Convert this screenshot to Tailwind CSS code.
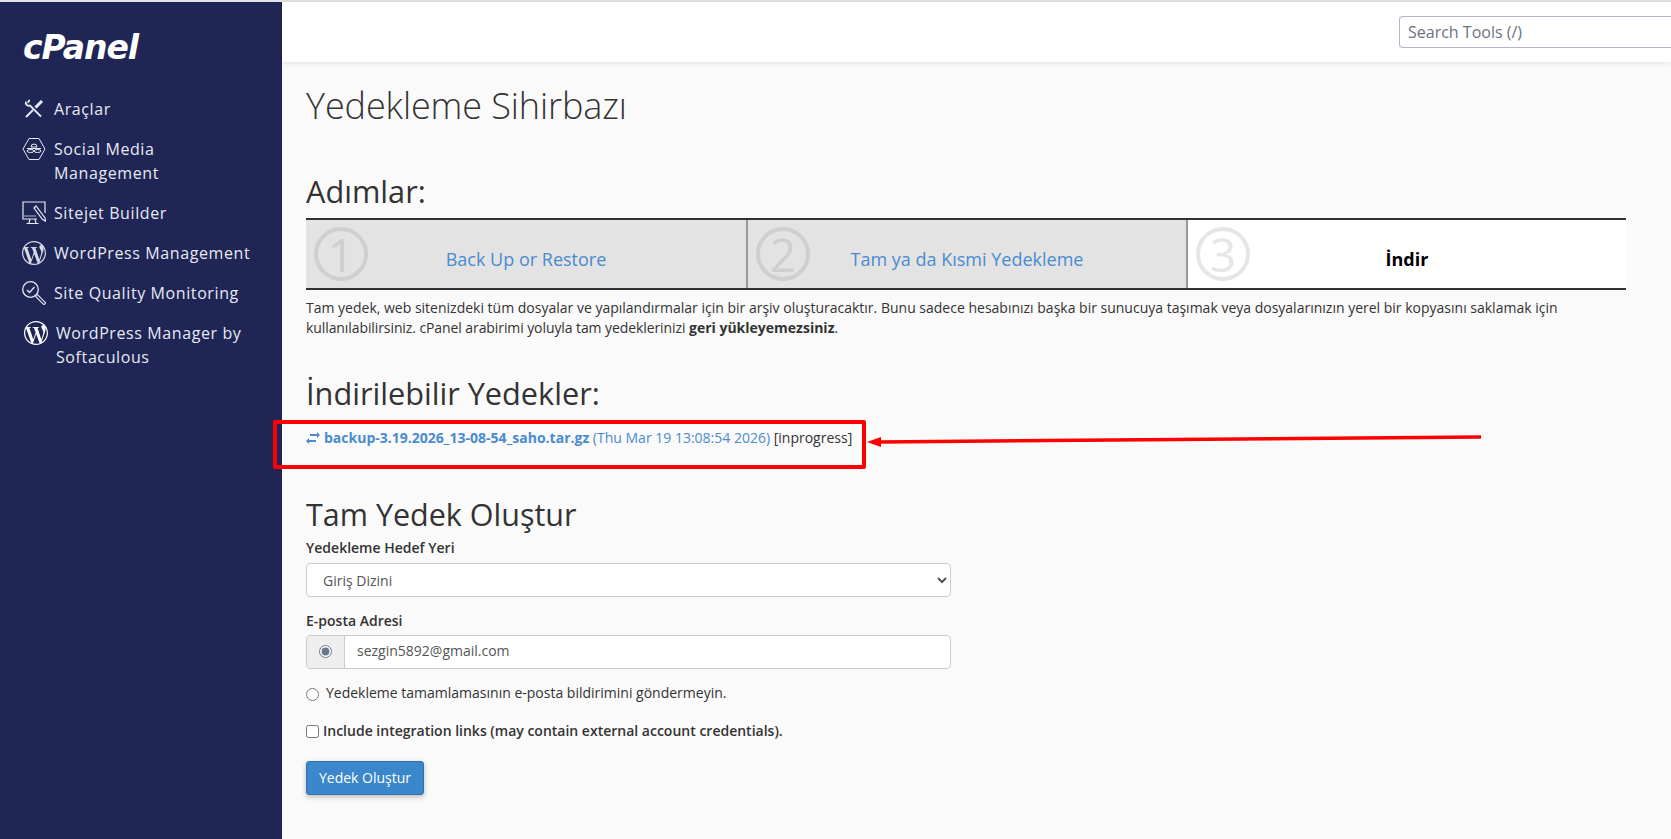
<!DOCTYPE html>
<html lang="tr">
<head>
<meta charset="UTF-8">
<script src="https://cdn.jsdelivr.net/npm/@tailwindcss/browser@4"></script>
<title>Yedekleme Sihirbazı</title>
</head>
<body class="h-[839px] overflow-hidden bg-[#fafafa] font-['Open_Sans',sans-serif] text-sm text-[#333]">
<div class="relative flex h-full border-t-2 border-[#e3e3e3]">
  <!-- sidebar -->
  <aside class="w-[282px] shrink-0 bg-[#1f2555] text-[#e6eaf2]">
    <div class="pl-[23px] pt-[26px] h-[87px] font-['DejaVu_Sans',sans-serif] text-[33px] leading-[40px] font-bold italic text-white tracking-[-1px]">cPanel</div>
    <nav class="text-base leading-6 tracking-[0.6px]">
      <a class="flex items-center gap-[8px] pl-[24px] py-[8px]">
        <svg class="w-[20px] h-[20px] shrink-0" viewBox="0 0 20 20" fill="none" stroke="currentColor" stroke-width="1.8"><path d="M2 2.5c-1 2.500 1.500 5 4 4l11 11"/><path d="M6 1.500c-1.500 0-2 1.500-1.500 2.500"/><path d="M18 2l-6.500 6.500" stroke-width="3"/><path d="M9 11l-7 7" stroke-width="2"/></svg>
        <span class="ml-[2px]">Araçlar</span>
      </a>
      <a class="flex items-start gap-[8px] pl-[22px] py-[8px]">
        <svg class="w-[24px] h-[24px] shrink-0" viewBox="0 0 24 24" fill="none" stroke="currentColor" stroke-width="1"><path d="M7 1.500h10l6 10.500-6 10.500H7L1 12z"/><path d="M9 10a3 3 0 0 1 6 0z"/><path d="M5 11.500h14"/><ellipse cx="8.500" cy="14" rx="3.500" ry="1.500"/><ellipse cx="15.500" cy="14" rx="3.500" ry="1.500"/></svg>
        <span>Social Media<br>Management</span>
      </a>
      <a class="flex items-start gap-[8px] pl-[22px] py-[8px]">
        <svg class="w-[24px] h-[24px] shrink-0" viewBox="0 0 24 24" fill="none" stroke="currentColor" stroke-width="1.2"><path d="M23 12V1H1v17h14"/><path d="M2 15h12" stroke="#9aa0b8"/><path d="M8 18l-1 4M13 18l1 4M4.500 22.500h12"/><path d="M12 7l2-2 9 12 .500 3-3-1.500z"/></svg>
        <span>Sitejet Builder</span>
      </a>
      <a class="flex items-start gap-[8px] pl-[22px] py-[8px]">
        <svg class="w-[24px] h-[24px] shrink-0 text-[#d5d9e4]" viewBox="0 0 24 24" fill="currentColor"><path d="M21.469 6.825c.84 1.537 1.318 3.3 1.318 5.175 0 3.979-2.156 7.456-5.363 9.325l3.295-9.527c.615-1.54.82-2.771.82-3.864 0-.405-.026-.78-.07-1.11m-7.981.105c.647-.03 1.232-.105 1.232-.105.582-.075.514-.93-.067-.899 0 0-1.755.135-2.88.135-1.064 0-2.85-.15-2.85-.15-.585-.03-.661.855-.075.885 0 0 .54.061 1.125.09l1.68 4.605-2.37 7.08L5.354 6.9c.649-.03 1.234-.1 1.234-.1.585-.075.516-.93-.065-.896 0 0-1.746.138-2.874.138-.2 0-.438-.008-.69-.015C4.911 3.15 8.235 1.215 12 1.215c2.809 0 5.365 1.072 7.286 2.833-.046-.003-.091-.009-.141-.009-1.06 0-1.812.923-1.812 1.914 0 .89.513 1.643 1.06 2.531.411.72.89 1.643.89 2.977 0 .915-.354 1.994-.821 3.479l-1.075 3.585-3.9-11.61.001.014zM12 22.784c-1.059 0-2.081-.153-3.048-.437l3.237-9.406 3.315 9.087c.024.053.05.101.078.149-1.12.393-2.325.609-3.582.609M1.211 12c0-1.564.336-3.05.935-4.39L7.29 21.709C3.694 19.96 1.212 16.271 1.212 12M12 0C5.385 0 0 5.385 0 12s5.385 12 12 12 12-5.385 12-12S18.615 0 12 0"/></svg>
        <span>WordPress Management</span>
      </a>
      <a class="flex items-start gap-[8px] pl-[22px] py-[8px]">
        <svg class="w-[24px] h-[24px] shrink-0" viewBox="0 0 24 24" fill="none" stroke="currentColor" stroke-width="1.3"><circle cx="8.500" cy="8.500" r="7.800"/><path d="M5 9l2.500 2.500L12.500 6"/><path d="M15 15l7 7" stroke-width="3.800" stroke-linecap="round"/><path d="M15 15l7 7" stroke="#1f2555" stroke-width="1.500" stroke-linecap="round"/></svg>
        <span>Site Quality Monitoring</span>
      </a>
      <a class="flex items-start gap-[8px] pl-[24px] py-[8px] pr-4">
        <svg class="w-[24px] h-[24px] shrink-0 text-white" viewBox="0 0 24 24" fill="currentColor"><path d="M21.469 6.825c.84 1.537 1.318 3.3 1.318 5.175 0 3.979-2.156 7.456-5.363 9.325l3.295-9.527c.615-1.54.82-2.771.82-3.864 0-.405-.026-.78-.07-1.11m-7.981.105c.647-.03 1.232-.105 1.232-.105.582-.075.514-.93-.067-.899 0 0-1.755.135-2.88.135-1.064 0-2.85-.15-2.85-.15-.585-.03-.661.855-.075.885 0 0 .54.061 1.125.09l1.68 4.605-2.37 7.08L5.354 6.9c.649-.03 1.234-.1 1.234-.1.585-.075.516-.93-.065-.896 0 0-1.746.138-2.874.138-.2 0-.438-.008-.69-.015C4.911 3.15 8.235 1.215 12 1.215c2.809 0 5.365 1.072 7.286 2.833-.046-.003-.091-.009-.141-.009-1.06 0-1.812.923-1.812 1.914 0 .89.513 1.643 1.06 2.531.411.72.89 1.643.89 2.977 0 .915-.354 1.994-.821 3.479l-1.075 3.585-3.9-11.61.001.014zM12 22.784c-1.059 0-2.081-.153-3.048-.437l3.237-9.406 3.315 9.087c.024.053.05.101.078.149-1.12.393-2.325.609-3.582.609M1.211 12c0-1.564.336-3.05.935-4.39L7.29 21.709C3.694 19.96 1.212 16.271 1.212 12M12 0C5.385 0 0 5.385 0 12s5.385 12 12 12 12-5.385 12-12S18.615 0 12 0"/></svg>
        <span>WordPress Manager by Softaculous</span>
      </a>
    </nav>
  </aside>

  <div class="flex-1 min-w-0">
    <!-- top bar -->
    <header class="h-[60px] bg-white shadow-[0_1px_6px_rgba(0,0,0,0.1)] flex justify-end pt-[14px]">
      <input class="w-[272px] h-[32px] border border-r-0 border-[#b4b6c8] rounded-l-[4px] px-2 text-base placeholder:text-[#6b7280] bg-white" placeholder="Search Tools (/)">
    </header>

    <main class="pl-[24px] pr-[45px]">
      <h1 class="mt-[24px] text-4xl leading-[40px] font-light tracking-[-0.1px]">Yedekleme Sihirbazı</h1>
      <h2 class="mt-[45px] text-[30.700px] leading-[40px]">Adımlar:</h2>

      <div class="mt-[7px] grid grid-cols-[442px_440px_1fr] border-y-2 border-[#333] h-[72px]">
        <div class="relative bg-[#e3e3e3] border-r-2 border-[#999] flex items-center justify-center pt-[10px]">
          <span class="absolute left-[8px] top-[7px] w-[54px] h-[54px] rounded-full border-[4px] border-[#cfcfcf] text-[#cfcfcf] text-[46px] leading-[46px] text-center">1</span>
          <a class="text-lg text-[#4a8bcf]">Back Up or Restore</a>
        </div>
        <div class="relative bg-[#e3e3e3] border-r-2 border-[#999] flex items-center justify-center pt-[10px]">
          <span class="absolute left-[8px] top-[7px] w-[54px] h-[54px] rounded-full border-[4px] border-[#cfcfcf] text-[#cfcfcf] text-[46px] leading-[46px] text-center">2</span>
          <a class="text-lg text-[#4a8bcf]">Tam ya da Kısmi Yedekleme</a>
        </div>
        <div class="relative bg-white flex items-center justify-center pt-[10px]">
          <span class="absolute left-[8px] top-[7px] w-[54px] h-[54px] rounded-full border-[4px] border-[#e6e6e6] text-[#e6e6e6] text-[46px] leading-[46px] text-center">3</span>
          <span class="text-lg font-bold text-black">İndir</span>
        </div>
      </div>

      <p class="mt-[8px] leading-[20px]">Tam yedek, web sitenizdeki tüm dosyalar ve yapılandırmalar için bir arşiv oluşturacaktır. Bunu sadece hesabınızı başka bir sunucuya taşımak veya dosyalarınızın yerel bir kopyasını saklamak için <span class="tracking-[-0.09px]">kullanılabilirsiniz. cPanel arabirimi yoluyla tam yedeklerinizi</span> <b>geri yükleyemezsiniz</b>.</p>

      <h2 class="mt-[35px] text-[30.700px] leading-[40px]">İndirilebilir Yedekler:</h2>
      <p class="mt-[15px] leading-[20px] flex items-center">
        <svg class="w-[14px] h-[12px] mr-[4px] text-[#4a8bcf]" viewBox="0 0 14 12" fill="currentColor"><path d="M4 2h7V0l3 3-3 3V4H4zM10 8H3V6l-3 3 3 3v-2h7z"/></svg>
        <a class="text-[#4a8bcf]"><b>backup-3.19.2026_13-08-54_saho.tar.gz</b> (Thu Mar 19 13:08:54 2026)</a>&nbsp;[inprogress]
      </p>

      <h2 class="mt-[46px] text-[30.500px] leading-[40px]">Tam Yedek Oluştur</h2>
      <label class="block mt-[4px] font-semibold leading-[20px]">Yedekleme Hedef Yeri</label>
      <select class="block mt-[5px] w-[645px] h-[34px] border border-[#ccc] rounded bg-white pl-[12px] text-[#555]"><option>Giriş Dizini</option></select>
      <label class="block mt-[14px] font-semibold leading-[20px]">E-posta Adresi</label>
      <div class="mt-[4px] flex w-[645px] h-[34px] border border-[#ccc] rounded bg-white overflow-hidden">
        <span class="w-[38px] bg-[#eee] border-r border-[#ccc] flex items-center justify-center"><input type="radio" checked class="w-[13px] h-[13px] -mt-[2px] accent-[#69788a]"></span>
        <span class="pl-[12px] leading-[30px] text-[#555]">sezgin5892@gmail.com</span>
      </div>
      <label class="mt-[14px] flex items-center gap-[7px] leading-[20px]"><input type="radio" class="w-[13px] h-[13px] mt-[2px]">Yedekleme tamamlamasının e-posta bildirimini göndermeyin.</label>
      <label class="mt-[18px] flex items-center gap-[4px] font-semibold leading-[20px]"><input type="checkbox" class="w-[13px] h-[13px]">Include integration links (may contain external account credentials).</label>
      <button class="mt-[20px] w-[118px] h-[34px] rounded-[3px] bg-[#3a87cb] border border-[#2f74b0] text-white shadow-[0_2px_5px_rgba(0,0,0,0.25)]">Yedek Oluştur</button>
    </main>
  </div>

  <!-- annotation drawn on the screenshot -->
  <div class="absolute left-[273px] top-[418px] w-[593px] h-[49px] border-[4px] rounded-[2px] border-[#ff0000]"></div>
  <svg class="absolute left-[860px] top-[425px]" width="630" height="30" viewBox="0 0 630 30"><path d="M621 10L20 15" stroke="#ff0000" stroke-width="3.500"/><path d="M7 15l14-5v10z" fill="#ff0000"/></svg>
</div>
</body>
</html>
